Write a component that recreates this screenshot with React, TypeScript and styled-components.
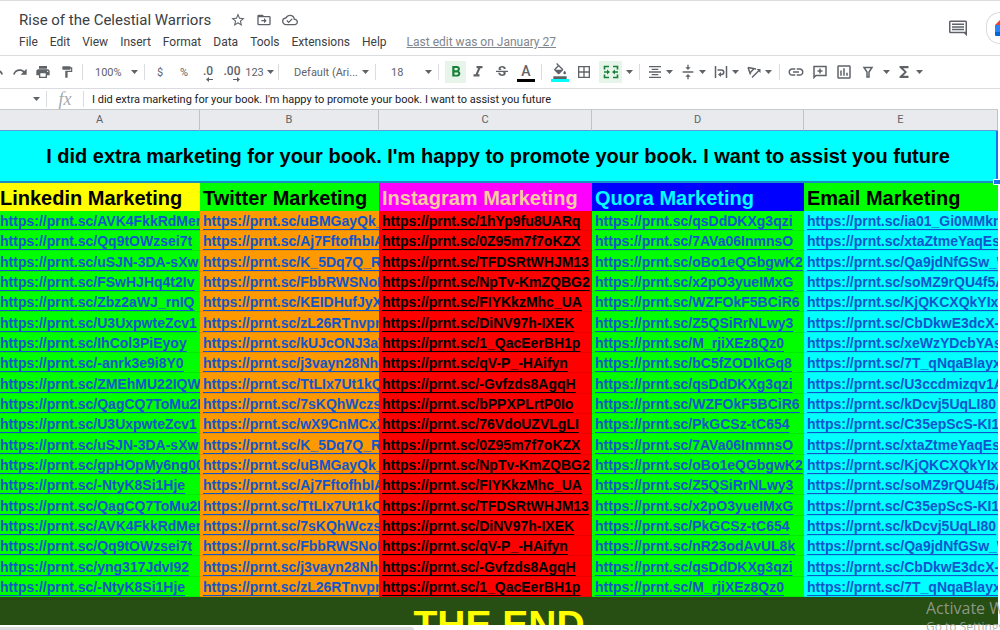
import React from "react";
import styled, { createGlobalStyle, css } from "styled-components";
import {
  MdStarBorder, MdOutlineCloudDone, MdUndo, MdRedo, MdPrint, MdFormatPaint,
  MdFormatBold, MdFormatItalic, MdStrikethroughS, MdFormatColorFill, MdBorderAll, MdFormatAlignCenter,
  MdVerticalAlignCenter, MdLink, MdOutlineInsertChart, MdFunctions,
} from "react-icons/md";

const Global = createGlobalStyle`
  * { box-sizing: border-box; }
  body { margin: 0; background: #fff; font-family: Roboto, "Liberation Sans", sans-serif; color: #3c4043; overflow: hidden; }
  button, input { font: inherit; color: inherit; border: 0; padding: 0; background: none; }
  svg { display: block; flex: none; }
`;

const Page = styled.div`
  height: 100vh;
  display: flex;
  flex-direction: column;
  overflow: hidden;
  position: relative;
  border-top: 1px solid #dadce0;
`;

const Header = styled.header`
  display: flex;
  justify-content: space-between;
  height: 54px;
  flex: none;
`;

const HeaderMain = styled.div`
  padding: 8px 0 0 19px;
`;

const TitleRow = styled.div`
  display: flex;
  align-items: center;
  gap: 10px;
  height: 22px;
  color: #5f6368;
`;

const DocTitle = styled.h1`
  margin: 0 9px 0 0;
  font-size: 15px;
  line-height: 20px;
  font-weight: 400;
  color: #3c4043;
  white-space: nowrap;
`;

const IconButton = styled.button`
  display: flex;
  align-items: center;
  justify-content: center;
`;

const MenuBar = styled.nav`
  display: flex;
  align-items: center;
  gap: 12px;
  height: 22px;
  font-size: 12px;
  line-height: 16px;
  white-space: nowrap;
`;

const EditLink = styled.a`
  margin-left: 8px;
  color: #80868b;
  text-decoration: underline;
`;

const HeaderActions = styled.div`
  display: flex;
  align-items: center;
  gap: 19px;
  color: #5f6368;
  overflow: hidden;
`;

const MeetButton = styled.button`
  width: 14px;
  height: 32px;
  border: 1px solid #dadce0;
  border-right: 0;
  border-radius: 16px 0 0 16px;
  display: flex;
  align-items: center;
  justify-content: flex-end;
`;

const Toolbar = styled.div`
  display: flex;
  align-items: center;
  height: 34px;
  flex: none;
  border-top: 1px solid #dadce0;
  border-bottom: 1px solid #dadce0;
  color: #5f6368;
  font-size: 11px;
  white-space: nowrap;
  overflow: hidden;
`;

const Tool = styled.button<{ $w: number; $active?: boolean }>`
  display: flex;
  align-items: center;
  justify-content: center;
  gap: 3px;
  flex: none;
  width: ${(p) => p.$w}px;
  height: 22px;
  ${(p) => p.$active && css`background: #e6f4ea; color: #188038;`}
`;

const UndoTool = styled(Tool)`
  justify-content: flex-end;
  padding-right: 4px;
`;

const PickerTool = styled(Tool)`
  justify-content: space-between;
  margin-left: 9px;
`;

const Divider = styled.span<{ $gap?: number }>`
  width: 1px;
  height: 16px;
  flex: none;
  background: #dadce0;
  margin: 0 ${(p) => p.$gap ?? 6}px;
`;

const ColorTool = styled(Tool)<{ $bar: string }>`
  height: 20px;
  border-bottom: 3px solid ${(p) => p.$bar};
  margin: 0 0 0 3px;
  font-size: 14px;
  line-height: 16px;
  font-weight: 500;
`;

const DecimalLabel = styled.span`
  display: flex;
  flex-direction: column;
  align-items: flex-end;
  font-size: 12px;
  line-height: 12px;
  font-weight: 500;
  padding-top: 3px;
`;

const FormulaBar = styled.div`
  display: flex;
  align-items: center;
  height: 20px;
  flex: none;
  color: #5f6368;
`;

const NameBox = styled.button`
  display: flex;
  align-items: center;
  justify-content: flex-end;
  width: 46px;
  height: 18px;
  padding-right: 6px;
`;

const Fx = styled.label`
  width: 36px;
  text-align: center;
  font: italic 18px/18px "Liberation Serif", serif;
  color: #a5a9ad;
`;

const FormulaInput = styled.input`
  flex: 1;
  min-width: 0;
  height: 18px;
  margin-left: 8px;
  font-size: 11px;
  color: #202124;
  outline: none;
`;

const SheetArea = styled.div`
  flex: 1;
  min-height: 0;
  overflow: hidden;
  padding-right: 2px;
`;

const Sheet = styled.table`
  width: 100%;
  table-layout: fixed;
  border-collapse: separate;
  border-spacing: 0;
  font-family: "Liberation Sans", Arial, sans-serif;
  font-weight: 700;
`;

const ColumnLetter = styled.th`
  height: 22px;
  padding: 0;
  background: #e8eaed;
  border-top: 1px solid #c8cacd;
  border-right: 1px solid #c0c3c6;
  border-bottom: 1px solid #5a9fd8;
  font: 400 11px/18px Roboto, "Liberation Sans", sans-serif;
  color: #5f6368;
`;

const BannerCell = styled.td`
  position: relative;
  height: 52px;
  padding: 0;
  background: #00ffff;
  border-bottom: 2px solid #1a8fc0;
  border-right: 2px solid #1a73e8;
  text-align: center;
  font-size: 20px;
  line-height: 24px;
  color: #000;
  white-space: nowrap;
`;

const FillHandle = styled.span`
  position: absolute;
  right: -4px;
  bottom: -4px;
  width: 7px;
  height: 6px;
  background: #1a73e8;
  border: 1px solid #fff;
  border-right: 0;
`;

const HeadingCell = styled.th<{ $bg: string; $fg: string }>`
  height: 28px;
  padding: 2px 0 0 3px;
  background: ${(p) => p.$bg};
  color: ${(p) => p.$fg};
  text-align: left;
  font-size: 20px;
  line-height: 26px;
  white-space: nowrap;
  overflow: hidden;
  &:first-child { padding-left: 0; }
`;

const LinkRow = styled.tr`
  height: 20px;
  &:nth-child(3n) { height: 21px; }
`;

const LinkCell = styled.td<{ $bg: string; $fg: string }>`
  padding: 1px 0 0 3px;
  background: ${(p) => p.$bg};
  border-bottom: 1px solid rgba(0, 0, 0, 0.08);
  font-size: 14px;
  line-height: 18px;
  white-space: nowrap;
  overflow: hidden;
  &:first-child { padding-left: 0; }
  a {
    color: ${(p) => p.$fg};
    text-decoration: underline;
    text-decoration-thickness: 1px;
    text-underline-offset: 3px;
    text-decoration-skip-ink: none;
  }
`;

const EndCell = styled.td`
  height: 56px;
  padding: 0;
  background: #274e13;
  color: #ffff00;
  text-align: center;
  font-size: 39px;
  line-height: 44px;
`;

const ScrollTrack = styled.div`
  height: 5px;
  flex: none;
  padding-top: 2px;
  background: #fff;
`;

const ScrollThumb = styled.div`
  width: 41.4%;
  height: 3px;
  background: #dadce0;
  border-radius: 0 4px 0 0;
`;

const Watermark = styled.div`
  position: absolute;
  left: calc(100% - 74px);
  bottom: -6px;
  font-family: "Open Sans", sans-serif;
  color: rgba(160, 165, 155, 0.85);
  white-space: nowrap;
  font-size: 16px;
  line-height: 20px;
  small { display: block; font-size: 12px; line-height: 18px; }
`;

const Caret = () => (
  <svg width="7" height="4" viewBox="0 0 7 4" aria-hidden="true"><path d="M0 0h7L3.5 4z" fill="currentColor" /></svg>
);

const Arrow = ({ back }: { back?: boolean }) => (
  <svg width="7" height="5" viewBox="0 0 7 5" aria-hidden="true">
    <path d={back ? "M0 2.5L3 0v2h4v1H3v2z" : "M7 2.500L4 0v2H0v1h4v2z"} fill="currentColor" />
  </svg>
);

const MergeIcon = () => (
  <svg width="16" height="14" viewBox="0 0 16 14" fill="none" stroke="currentColor" strokeWidth="1.600">
    <path d="M1.500 4.500V1.500h4.500M10 1.500h4.500v3M1.500 9.500v3h4.500M10 12.500h4.500v-3M1 7h4M11 7h4" />
    <path d="M4 4.500L7 7l-3 2.500zM12 4.500L9 7l3 2.500z" fill="currentColor" stroke="none" />
  </svg>
);

const WrapIcon = () => (
  <svg width="16" height="16" viewBox="0 0 16 16" fill="none" stroke="currentColor" strokeWidth="1.500">
    <path d="M2.500 2v12M13.500 2v12M4.500 6h4a2 2 0 0 1 0 4.500H7" />
    <path d="M8 8v5l-3-2.500z" fill="currentColor" stroke="none" />
  </svg>
);

const RotateIcon = () => (
  <svg width="16" height="16" viewBox="0 0 16 16" fill="none" stroke="currentColor" strokeWidth="1.500">
    <path d="M2 3.500l8 1.500M2 3.500L4.500 10.500M4 9l4-4.500" />
    <path d="M6 13.500L13 6.500" />
    <path d="M14.500 5v4L10.500 5z" fill="currentColor" stroke="none" />
  </svg>
);

const AddCommentIcon = () => (
  <svg width="16" height="16" viewBox="0 0 16 16" fill="none" stroke="currentColor" strokeWidth="1.500">
    <path d="M2 13.500V2.500h12v9H4z" />
    <path d="M8 4.500v5M5.500 7h5" />
  </svg>
);

const FilterIcon = () => (
  <svg width="14" height="14" viewBox="0 0 14 14" fill="none" stroke="currentColor" strokeWidth="1.500">
    <path d="M3 2.500h8L8 7v5H6V7z" />
  </svg>
);

const menus = ["File", "Edit", "View", "Insert", "Format", "Data", "Tools", "Extensions", "Help"];

const columns = [
  { letter: "A", width: 200, title: "Linkedin Marketing", head: ["#ffff00", "#000"], body: ["#00ff00", "#1155cc"],
    links: ["AVK4FkkRdMem", "Qq9tOWzsei7t", "uSJN-3DA-sXw", "FSwHJHq4t2Iv", "Zbz2aWJ_rnIQ", "U3UxpwteZcv1", "IhCol3PiEyoy", "-anrk3e9i8Y0", "ZMEhMU22IQW1", "QagCQ7ToMu2F", "U3UxpwteZcv1", "uSJN-3DA-sXw", "gpHOpMy6ng00", "-NtyK8Si1Hje", "QagCQ7ToMu2F", "AVK4FkkRdMem", "Qq9tOWzsei7t", "yng317JdvI92", "-NtyK8Si1Hje"] },
  { letter: "B", width: 179, title: "Twitter Marketing", head: ["#00ff00", "#000"], body: ["#ff9900", "#1155cc"],
    links: ["uBMGayQk_", "Aj7FftofhbIA", "K_5Dq7Q_R1", "FbbRWSNoD", "KEIDHufJyX-", "zL26RTnvpm", "kUJcONJ3aT", "j3vayn28Nhe", "TtLIx7Ut1kQI", "7sKQhWczsJ", "wX9CnMCxX", "K_5Dq7Q_R1", "uBMGayQk_", "Aj7FftofhbIA", "TtLIx7Ut1kQI", "7sKQhWczsJ", "FbbRWSNoD", "j3vayn28Nhe", "zL26RTnvpm"] },
  { letter: "C", width: 213, title: "Instagram Marketing", head: ["#ff00ff", "#f9cb9c"], body: ["#ff0000", "#000"],
    links: ["1hYp9fu8UARq", "0Z95m7f7oKZX", "TFDSRtWHJM13", "NpTv-KmZQBG2", "FIYKkzMhc_UA", "DiNV97h-IXEK", "1_QacEerBH1p", "qV-P_-HAifyn", "-Gvfzds8AgqH", "bPPXPLrtP0Io", "76VdoUZVLgLI", "0Z95m7f7oKZX", "NpTv-KmZQBG2", "FIYKkzMhc_UA", "TFDSRtWHJM13", "DiNV97h-IXEK", "qV-P_-HAifyn", "-Gvfzds8AgqH", "1_QacEerBH1p"] },
  { letter: "D", width: 212, title: "Quora Marketing", head: ["#0000ff", "#00ffff"], body: ["#00ff00", "#1155cc"],
    links: ["qsDdDKXg3qzi", "7AVa06InmnsO", "oBo1eQGbgwK2", "x2pO3yueIMxG", "WZFOkF5BCiR6", "Z5QSiRrNLwy3", "M_rjiXEz8Qz0", "bC5fZODIkGq8", "qsDdDKXg3qzi", "WZFOkF5BCiR6", "PkGCSz-tC654", "7AVa06InmnsO", "oBo1eQGbgwK2", "Z5QSiRrNLwy3", "x2pO3yueIMxG", "PkGCSz-tC654", "nR23odAvUL8k", "qsDdDKXg3qzi", "M_rjiXEz8Qz0"] },
  { letter: "E", width: 194, title: "Email Marketing", head: ["#00ff00", "#000"], body: ["#00ffff", "#1155cc"],
    links: ["ia01_Gi0MMkm", "xtaZtmeYaqEs", "Qa9jdNfGSw_W", "soMZ9rQU4f5A", "KjQKCXQkYIxa", "CbDkwE3dcX-E", "xeWzYDcbYAsU", "7T_qNqaBlayx", "U3ccdmizqv1A", "kDcvj5UqLI80", "C35epScS-KI1", "xtaZtmeYaqEs", "KjQKCXQkYIxa", "soMZ9rQU4f5A", "C35epScS-KI1", "kDcvj5UqLI80", "Qa9jdNfGSw_W", "CbDkwE3dcX-E", "7T_qNqaBlayx"] },
];

const message = "I did extra marketing for your book. I'm happy to promote your book. I want to assist you future";

export default function App() {
  return (
    <Page>
      <Global />
      <Header>
        <HeaderMain>
          <TitleRow>
            <DocTitle>Rise of the Celestial Warriors</DocTitle>
            <IconButton aria-label="Star"><MdStarBorder size={16} /></IconButton>
            <IconButton aria-label="Move">
              <svg width="16" height="16" viewBox="0 0 24 24" fill="currentColor">
                <path d="M20 6h-8l-2-2H4a2 2 0 0 0-2 2v12a2 2 0 0 0 2 2h16a2 2 0 0 0 2-2V8a2 2 0 0 0-2-2zm0 12H4V8h16zM12 17l4-4-4-4v3H8v2h4z" />
              </svg>
            </IconButton>
            <IconButton aria-label="Saved"><MdOutlineCloudDone size={16} /></IconButton>
          </TitleRow>
          <MenuBar>
            {menus.map((m) => <button key={m}>{m}</button>)}
            <EditLink href="#history">Last edit was on January 27</EditLink>
          </MenuBar>
        </HeaderMain>
        <HeaderActions>
          <IconButton aria-label="Comments">
            <svg width="18" height="18" viewBox="0 0 24 24" fill="currentColor"><path fillRule="evenodd" d="M24 4a2 2 0 0 0-2-2H2a2 2 0 0 0-2 2v13a2 2 0 0 0 2 2h18l4 4V4zM22 17H2V4h20zM4 6h16v2H4zm0 3.500h16v2H4zM4 13h16v2H4z" /></svg>
          </IconButton>
          <MeetButton aria-label="Meet">
            <svg width="5" height="16" viewBox="0 0 5 16"><path d="M0 5L5 0v5z" fill="#ea4335" /><path d="M0 5h5v7H0z" fill="#2684fc" /><path d="M0 12h5v4H1a1 1 0 0 1-1-1z" fill="#0066da" /></svg>
          </MeetButton>
        </HeaderActions>
      </Header>

      <Toolbar>
        <UndoTool $w={8} aria-label="Undo"><MdUndo size={16} /></UndoTool>
        <Tool $w={23} aria-label="Redo"><MdRedo size={16} /></Tool>
        <Tool $w={24} aria-label="Print"><MdPrint size={16} /></Tool>
        <Tool $w={24} aria-label="Paint format"><MdFormatPaint size={14} /></Tool>
        <Divider $gap={3} />
        <PickerTool $w={43}>100% <Caret /></PickerTool>
        <Divider />
        <Tool $w={18}>$</Tool>
        <Tool $w={30}>%</Tool>
        <Tool $w={18} aria-label="Fewer decimals"><DecimalLabel>.0<Arrow back /></DecimalLabel></Tool>
        <Tool $w={30} aria-label="More decimals"><DecimalLabel>.00<Arrow /></DecimalLabel></Tool>
        <Tool $w={25}>123<Caret /></Tool>
        <Divider />
        <PickerTool $w={75}>Default (Ari... <Caret /></PickerTool>
        <Divider />
        <PickerTool $w={41}>18 <Caret /></PickerTool>
        <Divider />
        <Tool $w={21} $active aria-label="Bold"><MdFormatBold size={18} /></Tool>
        <Tool $w={24} aria-label="Italic"><MdFormatItalic size={18} /></Tool>
        <Tool $w={24} aria-label="Strikethrough"><MdStrikethroughS size={16} /></Tool>
        <ColorTool $w={18} $bar="#000">A</ColorTool>
        <Divider />
        <ColorTool $w={18} $bar="#00ffff" aria-label="Fill"><MdFormatColorFill size={16} /></ColorTool>
        <Tool $w={30} aria-label="Borders"><MdBorderAll size={16} /></Tool>
        <Tool $w={23} $active aria-label="Merge"><MergeIcon /></Tool>
        <Tool $w={14} aria-label="Merge options"><Caret /></Tool>
        <Divider $gap={3} />
        <Tool $w={33} aria-label="Align"><MdFormatAlignCenter size={16} /><Caret /></Tool>
        <Tool $w={33} aria-label="Vertical align"><MdVerticalAlignCenter size={16} /><Caret /></Tool>
        <Tool $w={33} aria-label="Wrap"><WrapIcon /><Caret /></Tool>
        <Tool $w={33} aria-label="Rotate"><RotateIcon /><Caret /></Tool>
        <Divider $gap={4} />
        <Tool $w={24} aria-label="Link"><MdLink size={18} /></Tool>
        <Tool $w={24} aria-label="Add comment"><AddCommentIcon /></Tool>
        <Tool $w={24} aria-label="Chart"><MdOutlineInsertChart size={18} /></Tool>
        <Tool $w={24} aria-label="Filter"><FilterIcon /></Tool>
        <Tool $w={12} aria-label="Filter views"><Caret /></Tool>
        <Tool $w={33} aria-label="Functions"><MdFunctions size={18} /><Caret /></Tool>
      </Toolbar>

      <FormulaBar>
        <NameBox aria-label="Name box"><Caret /></NameBox>
        <Divider $gap={0} />
        <Fx htmlFor="formula">fx</Fx>
        <Divider $gap={0} />
        <FormulaInput id="formula" defaultValue={message} />
      </FormulaBar>

      <SheetArea>
        <Sheet>
          <colgroup>{columns.map((c) => <col key={c.letter} style={{ width: `${c.width / 9.98}%` }} />)}</colgroup>
          <thead>
            <tr>{columns.map((c) => <ColumnLetter key={c.letter}>{c.letter}</ColumnLetter>)}</tr>
            <tr><BannerCell colSpan={5}>{message}<FillHandle /></BannerCell></tr>
            <tr>{columns.map((c) => <HeadingCell key={c.letter} $bg={c.head[0]} $fg={c.head[1]}>{c.title}</HeadingCell>)}</tr>
          </thead>
          <tbody>
            {columns[0].links.map((_, i) => (
              <LinkRow key={i}>
                {columns.map((c) => (
                  <LinkCell key={c.letter} $bg={c.body[0]} $fg={c.body[1]}>
                    <a href={`https://prnt.sc/${c.links[i]}`}>https://prnt.sc/{c.links[i]}</a>
                  </LinkCell>
                ))}
              </LinkRow>
            ))}
          </tbody>
          <tfoot><tr><EndCell colSpan={5}>THE END</EndCell></tr></tfoot>
        </Sheet>
      </SheetArea>
      <ScrollTrack><ScrollThumb /></ScrollTrack>
      <Watermark>Activate Windows<small>Go to Settings</small></Watermark>
    </Page>
  );
}
